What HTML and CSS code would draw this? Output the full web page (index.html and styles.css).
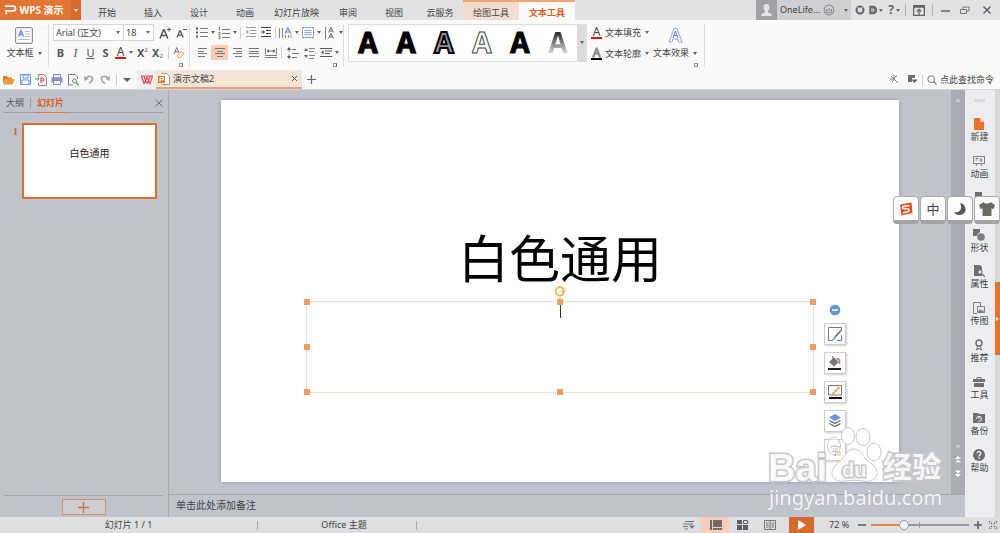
FILE: index.html
```html
<!DOCTYPE html>
<html lang="zh-CN">
<head>
<meta charset="utf-8">
<title>WPS 演示 - 演示文稿2</title>
<link rel="stylesheet" href="styles.css">
</head>
<body>
<div class="app">
  <header class="titlebar">
    <button class="brand" type="button">
      <svg width="13" height="12" viewBox="0 0 13 12"><path d="M1 2.2h8.2a2.3 2.3 0 0 1 0 4.6H2.2v3.4" fill="none" stroke="#fff" stroke-width="1.8"/></svg>
      <span>WPS 演示</span>
    </button>
    <button class="brand-menu" type="button" aria-label="菜单"><i class="caret"></i></button>
    <nav class="tabs">
      <button type="button">开始</button>
      <button type="button">插入</button>
      <button type="button">设计</button>
      <button type="button">动画</button>
      <button type="button">幻灯片放映</button>
      <button type="button">审阅</button>
      <button type="button">视图</button>
      <button type="button">云服务</button>
      <button type="button" class="context">绘图工具</button>
      <button type="button" class="context current">文本工具</button>
    </nav>
    <div class="account">
      <span class="avatar"><svg width="13" height="14" viewBox="0 0 13 14"><path d="M6.500 1a3 3.200 0 0 1 3 3.300c0 1.600-.8 2.800-1.500 3.600v1.300c1 .8 4 1 4.200 3.800H.8C1 10.200 4 10 5 9.200V7.900c-.7-.8-1.500-2-1.500-3.600A3 3.200 0 0 1 6.500 1z" fill="#e4e4e6"/></svg></span>
      <span>OneLife...</span>
      <svg width="12" height="12" viewBox="0 0 12 12"><circle cx="6" cy="6" r="4.800" fill="none" stroke="#909094" stroke-width="1.200"/><path d="M3.500 8.500v-3l1.400 1L6 4.500l1.100 2 1.400-1v3z" fill="none" stroke="#909094"/></svg>
      <i class="caret end"></i>
    </div>
    <div class="window-tools">
      <button type="button" class="w15" aria-label="皮肤"><svg width="10" height="10" viewBox="0 0 10 10"><circle cx="5" cy="5" r="3.500" fill="none" stroke="#626266" stroke-width="2"/><path d="M2 2.500l3 1.800 3-2M5 4.300V7" stroke="#e2e2e4" fill="none"/></svg></button>
      <button type="button" class="w18" aria-label="文档"><svg width="8" height="10" viewBox="0 0 8 10"><path d="M1 1.500h3a3.500 3.500 0 0 1 0 7H1z" fill="#777" stroke="#626266" stroke-width="1.300"/><path d="M3 3v4M4.700 4v2" stroke="#ddd"/></svg><i class="caret"></i></button>
      <button type="button" class="w18" aria-label="帮助"><b class="question">?</b><i class="caret"></i></button>
      <i class="sep"></i>
      <button type="button" class="w23" aria-label="功能区"><svg width="12" height="11" viewBox="0 0 12 11"><path d="M.6.600h10.800v9.800H.600zM0 2h12" fill="none" stroke="#666" stroke-width="1.400"/><path d="M6 10V5M3.800 6.500L6 4.300l2.200 2.200" fill="none" stroke="#666" stroke-width="1.300"/></svg></button>
      <i class="sep"></i>
      <button type="button" class="w22" aria-label="最小化"><svg width="10" height="10" viewBox="0 0 10 10"><path d="M1 6h9" stroke="#666" stroke-width="1.500"/></svg></button>
      <button type="button" class="w17" aria-label="还原"><svg width="10" height="10" viewBox="0 0 10 10"><path d="M.500 4.500h6v4h-6zM3 4V2h6v4H7" fill="none" stroke="#777"/></svg></button>
      <button type="button" class="w27" aria-label="关闭"><svg width="10" height="10" viewBox="0 0 10 10"><path d="M1.500 1.500l7 7M8.500 1.500l-7 7" stroke="#606064" stroke-width="1.500"/></svg></button>
    </div>
  </header>

  <section class="ribbon">
    <div class="group textbox-group">
      <button type="button" class="tall">
        <svg width="18" height="17" viewBox="0 0 18 17"><rect x=".700" y=".700" width="16.600" height="15.600" rx="1" fill="#fff" stroke="#777"/><path d="M3.500 9.500L6 3.500l2.500 6M4.300 7.500h3.400" fill="none" stroke="#5b8def" stroke-width="1.300"/><path d="M10 4.500h5M10 7h5M10 9.500h5M3.500 12.500H15" stroke="#bbb"/></svg>
        <span>文本框<i class="caret"></i></span>
      </button>
    </div>
    <div class="group font-group">
      <div class="row">
        <span class="combo font"><select aria-label="字体"><option>Arial (正文)</option></select><i class="caret"></i></span>
        <span class="combo size"><select aria-label="字号"><option>18</option></select><i class="caret"></i></span>
        <button type="button" class="w18 grow" aria-label="增大字号"><svg width="12" height="12" viewBox="0 0 12 12"><path d="M1 11.500L4.500 3h.8L8.800 11.500M2.500 8.500h5" fill="none" stroke="#555" stroke-width="1.500"/><path d="M8 2.500h4M10 .500v4" stroke="#555"/></svg></button>
        <button type="button" class="w15" aria-label="减小字号"><svg width="11" height="12" viewBox="0 0 11 12"><path d="M1 10.500L3.800 4h.6L7.200 10.500M2.200 8.200h4" fill="none" stroke="#555" stroke-width="1.300"/><path d="M7 2.500h4" stroke="#555"/></svg></button>
      </div>
      <div class="row letters">
        <button type="button" class="w15"><b>B</b></button>
        <button type="button" class="w15 italic">I</button>
        <button type="button" class="w15 underline">U</button>
        <button type="button" class="w15"><b>S</b></button>
        <button type="button" class="w22"><span class="fill-a">A</span><i class="caret"></i></button>
        <button type="button" class="w15" aria-label="上标"><b>X</b><sup>2</sup></button>
        <button type="button" class="w15" aria-label="下标"><b>X</b><sub>2</sub></button>
        <i class="sep"></i>
        <button type="button" class="w15" aria-label="清除格式"><svg width="12" height="13" viewBox="0 0 12 13"><path d="M1 8L3.700 1.500 6 7M2 5.800h3" fill="none" stroke="#777"/><path d="M4.500 9.500l3.800-4 2.700 2.300-3.800 4H5.500z" fill="#fff0dd" stroke="#eca35a"/></svg></button>
      </div>
      <button type="button" class="launcher" aria-label="字体设置"></button>
    </div>
    <div class="group para-group">
      <div class="row">
        <button type="button" class="w22" aria-label="项目符号"><svg width="12" height="11" viewBox="0 0 12 11"><path d="M4 1.500h8M4 5.500h8M4 9.500h8" stroke="#777"/><path d="M0 1.500h2M0 5.500h2M0 9.500h2" stroke="#555" stroke-width="2"/></svg><i class="caret"></i></button>
        <button type="button" class="w22" aria-label="编号"><svg width="12" height="12" viewBox="0 0 12 12"><path d="M4 2.500h8M4 6.500h8M4 10.500h8" stroke="#777"/><path d="M1.500 0v3.500M.500 5.500h1.500v1L.500 7.800H2.500M.500 9.500h1.500v2H.500" fill="none" stroke="#777"/></svg><i class="caret"></i></button>
        <i class="sep"></i>
        <button type="button" class="w15" aria-label="减少缩进"><svg width="10" height="11" viewBox="0 0 10 11"><path d="M0 .500h10M4 3.500h6M4 6.500h6M0 9.500h10M0 5h3" stroke="#999"/><path d="M2 3L0 5l2 2z" fill="#999"/></svg></button>
        <button type="button" class="w15" aria-label="增加缩进"><svg width="10" height="11" viewBox="0 0 10 11"><path d="M0 .500h10M5 3.500h5M5 6.500h5M0 9.500h10M0 5h3" stroke="#444"/><path d="M2 3l2 2-2 2z" fill="#444"/></svg></button>
        <i class="sep"></i>
        <button type="button" class="w22" aria-label="文字方向"><svg width="13" height="12" viewBox="0 0 13 12"><path d="M.500 1v10M3.500 1v10" stroke="#888"/><path d="M6.500 8v3M9.500 8v3M12 8v3" stroke="#888"/><path d="M6 7l2.800-6L12 7M7 5h4" fill="none" stroke="#6b8fe6" stroke-width="1.200"/></svg><i class="caret"></i></button>
        <button type="button" class="w22" aria-label="对齐文本"><svg width="12" height="11" viewBox="0 0 12 11"><rect x=".500" y=".500" width="11" height="10" fill="none" stroke="#777" stroke-dasharray="2 1"/><path d="M2.500 3.500h7M2.500 5.500h7M2.500 7.500h7" stroke="#8fa9ea"/></svg><i class="caret"></i></button>
        <button type="button" class="w22" aria-label="字符间距"><svg width="12" height="12" viewBox="0 0 12 12"><path d="M1.500 0v12" stroke="#777"/><path d="M4.500 5.500L7 .500l2.500 5M5.500 4h3M4.500 11.500L7 6.500l2.500 5M5.500 10h3" fill="none" stroke="#666"/></svg><i class="caret"></i></button>
      </div>
      <div class="row">
        <button type="button" class="w17" aria-label="左对齐"><svg width="10" height="9" viewBox="0 0 10 9"><path d="M0 .500h9M0 3.500h6M0 5.500h9M0 8.500h7" stroke="#777"/></svg></button>
        <button type="button" class="w17 active" aria-label="居中"><svg width="10" height="9" viewBox="0 0 10 9"><path d="M0 .500h10M2 3.500h6M0 5.500h10M2 8.500h6" stroke="#777"/></svg></button>
        <button type="button" class="w17" aria-label="右对齐"><svg width="10" height="9" viewBox="0 0 10 9"><path d="M1 .500h9M4 3.500h6M1 5.500h9M3 8.500h7" stroke="#777"/></svg></button>
        <button type="button" class="w17" aria-label="两端对齐"><svg width="10" height="9" viewBox="0 0 10 9"><path d="M0 .500h10M0 3.500h10M0 5.500h10M0 8.500h10" stroke="#777"/></svg></button>
        <button type="button" class="w17" aria-label="分散对齐"><svg width="12" height="10" viewBox="0 0 12 10"><path d="M.500 0v6M11.500 0v6M2 3h8M0 7.500h12M0 9.500h12" stroke="#777"/><path d="M4 1L2 3l2 2zM8 1l2 2-2 2z" fill="#555"/></svg></button>
        <i class="sep"></i>
        <button type="button" class="w17" aria-label="行距"><svg width="12" height="12" viewBox="0 0 12 12"><path d="M5 2.500h4M5 6.500h7M5 10.500h5M2 1v3.500M2 7.500V11" stroke="#777"/><path d="M0 3l2-3 2 3zM0 9l2 3 2-3z" fill="#555"/></svg></button>
        <button type="button" class="w17" aria-label="段间距"><svg width="12" height="12" viewBox="0 0 12 12"><path d="M5 1.500h6M5 4.500h5M5 8.500h6M5 11.500h5" stroke="#888"/><path d="M0 4l2-3 2 3zM0 8l2 3 2-3z" fill="#666"/></svg></button>
        <button type="button" class="w22" aria-label="缩进"><svg width="12" height="10" viewBox="0 0 12 10"><path d="M0 .500h12M5 3h7M5 5.500h5M0 8.500h12" stroke="#555"/><path d="M3.500 2L1 4.200l2.500 2.300z" fill="#555"/></svg><i class="caret"></i></button>
      </div>
      <button type="button" class="launcher" aria-label="段落设置"></button>
    </div>
    <div class="group gallery-group">
      <div class="gallery">
        <button type="button" class="shadow">A</button>
        <button type="button" class="shadow">A</button>
        <button type="button" class="gray-fill">A</button>
        <button type="button" class="hollow">A</button>
        <button type="button" class="solid">A</button>
        <button type="button" class="fade"><span>A</span></button>
        <button type="button" class="more" aria-label="更多样式"><i class="caret"></i></button>
      </div>
    </div>
    <div class="group effect-group">
      <div class="stack">
        <button type="button" class="labelled"><span class="fill-a">A</span>文本填充<i class="caret"></i></button>
        <button type="button" class="labelled"><span class="fill-a line-a">A</span>文本轮廓<i class="caret"></i></button>
      </div>
      <button type="button" class="tall">
        <svg width="15" height="17" viewBox="0 0 15 17"><path d="M1 15L6 1.500h3L14 15h-3l-1-3H5l-1 3z" fill="#fff" stroke="#8ea6e4"/><path d="M5 11l2.500-7L10 11M6 8.500h3" fill="none" stroke="#5f80d8"/></svg>
        <span>文本效果<i class="caret"></i></span>
      </button>
      <button type="button" class="launcher" aria-label="文本效果设置"></button>
    </div>
  </section>

  <section class="docbar">
    <div class="quick">
      <button type="button" aria-label="打开"><svg width="12" height="10" viewBox="0 0 12 10"><path d="M0 9V1h4l1 1.500h4V4H3z" fill="#e07f28"/><path d="M3 4h9L9.500 9.500H.500z" fill="#f39b3b"/></svg></button>
      <button type="button" aria-label="保存"><svg width="11" height="11" viewBox="0 0 11 11"><path d="M.500.500h10v10H.500z" fill="#e7effd" stroke="#6e9bea"/><path d="M3 1h5v3H3zM2 6h7v4.500H2z" fill="#fff" stroke="#6e9bea"/></svg></button>
      <button type="button" aria-label="输出PDF"><svg width="12" height="12" viewBox="0 0 12 12"><path d="M3.500 3V.500h5l3 3v8h-8V9" fill="none" stroke="#888"/><path d="M6 9V4h1.500a1.500 1.500 0 0 1 0 3H6" fill="none" stroke="#d84b50" stroke-width="1.200"/><path d="M0 5h4M2.500 3.500L4 5 2.500 6.500" fill="none" stroke="#4e9a58"/></svg></button>
      <button type="button" aria-label="打印"><svg width="12" height="11" viewBox="0 0 12 11"><path d="M2.500.500h7V4h-7z" fill="#eee" stroke="#8186bd"/><path d="M.500 3.500h11v5H.500z" fill="#8c8fc8"/><path d="M2.500 6.500h7v4h-7z" fill="#fff" stroke="#8186bd"/></svg></button>
      <button type="button" aria-label="打印预览"><svg width="11" height="12" viewBox="0 0 11 12"><path d="M9.500 5V3L7 .500H.500v10.500H5" fill="#fff" stroke="#777"/><circle cx="6.500" cy="7" r="2" fill="#dff1de" stroke="#57a056"/><path d="M8 8.500l2.500 2.500" stroke="#57a056" stroke-width="1.500"/></svg></button>
      <button type="button" aria-label="撤销"><svg width="10" height="9" viewBox="0 0 10 9"><path d="M2 4C4-.500 9 1 8.500 4.500 8.200 6.500 6.500 7.500 5 8.500" fill="none" stroke="#a3a3a6" stroke-width="1.600"/><path d="M0 1l.500 5 4-2z" fill="#a3a3a6"/></svg></button>
      <button type="button" aria-label="恢复"><svg width="10" height="9" viewBox="0 0 10 9"><path d="M8 4C6-.500 1 1 1.500 4.500 1.800 6.500 3.500 7.500 5 8.500" fill="none" stroke="#a3a3a6" stroke-width="1.600"/><path d="M10 1l-.500 5-4-2z" fill="#a3a3a6"/></svg></button>
      <i class="sep"></i>
      <button type="button" class="quick-more" aria-label="自定义"><i class="caret big"></i></button>
    </div>
    <button type="button" class="home" aria-label="首页"><svg width="12" height="10" viewBox="0 0 12 10"><path d="M.500 1L3 8.500 6 2.500 9 8.500 11.500 1M3 1l2.500 7.500M9 1L6.500 8.500M0 1h12" fill="none" stroke="#e14853" stroke-width="1.200"/></svg></button>
    <div class="doc">
      <svg width="12" height="12" viewBox="0 0 12 12"><path d="M3.500 1V.500h5l3 3v8h-8" fill="#fff" stroke="#999"/><path d="M0 3h7v7H0z" fill="#e77433"/><path d="M2 9V4.500h3.300v2.300H2" fill="none" stroke="#fff"/></svg>
      <span>演示文稿2</span>
      <button type="button" aria-label="关闭文档"><svg width="7" height="7" viewBox="0 0 7 7"><path d="M1 1l5 5M6 1L1 6" stroke="#555"/></svg></button>
    </div>
    <button type="button" class="new-doc" aria-label="新建文档"><svg width="9" height="9" viewBox="0 0 9 9"><path d="M0 4.500h9M4.500 0v9" stroke="#666" stroke-width="1.200"/></svg></button>
    <div class="find">
      <button type="button" class="w18" aria-label="工具"><svg width="9" height="9" viewBox="0 0 9 9"><path d="M1 1l7 7M4 0v4M0 4h5M2 7l3-3M5 2l2-1" stroke="#777"/></svg></button>
      <button type="button" class="w18" aria-label="布局"><svg width="10" height="9" viewBox="0 0 10 9"><path d="M0 0h7v3H4v4H0z" fill="#707074"/><path d="M3.500 4.500h6L6.500 8z" fill="#606064"/></svg></button>
      <i class="sep"></i>
      <button type="button" class="labelled"><svg width="10" height="10" viewBox="0 0 10 10"><circle cx="4.200" cy="4.200" r="3.400" fill="none" stroke="#777"/><path d="M6.500 6.500l3 3" stroke="#777" stroke-width="1.300"/></svg>点此查找命令</button>
    </div>
  </section>

  <main class="work">
    <aside class="slides">
      <div class="slides-head">
        <button type="button">大纲</button><i class="sep"></i><button type="button" class="current">幻灯片</button>
        <button type="button" class="close" aria-label="关闭窗格"><svg width="8" height="8" viewBox="0 0 8 8"><path d="M.500.500l7 7M7.500.500l-7 7" stroke="#6c6c74"/></svg></button>
      </div>
      <div class="thumb-row">
        <span class="num">1</span>
        <button type="button" class="thumb">白色通用</button>
      </div>
      <div class="slides-foot"><button type="button" aria-label="新建幻灯片"><svg width="11" height="11" viewBox="0 0 11 11"><path d="M0 5.500h11M5.500 0v11" stroke="#d0713d" stroke-width="1.300"/></svg></button></div>
    </aside>

    <section class="editor">
      <div class="stage">
        <div class="canvas">
          <div class="slide">
            <h1>白色通用</h1>
            <div class="frame">
              <i class="h tl"></i><i class="h tc"></i><i class="h tr"></i><i class="h ml"></i><i class="h mr"></i><i class="h bl"></i><i class="h bc"></i><i class="h br"></i>
              <svg class="rotate" width="12" height="16" viewBox="0 0 12 16"><path d="M9.500 7.500A4.200 4.200 0 1 1 10 4.500" fill="none" stroke="#f3ad3f" stroke-width="1.600"/><path d="M7 4.500h5L9.500 8z" fill="#f3ad3f"/><path d="M6 10v6" stroke="#f3ad3f"/></svg>
              <i class="cursor"></i>
            </div>
            <div class="float-tools">
              <button type="button" class="fold" aria-label="收起"><svg width="12" height="12" viewBox="0 0 12 12"><circle cx="6" cy="6" r="5.300" fill="#5f97dc"/><path d="M3 6h6" stroke="#fff" stroke-width="1.600"/></svg></button>
              <button type="button" aria-label="样式"><svg width="14" height="14" viewBox="0 0 14 14"><path d="M5 13.500H.500V.500h13V4M13.500 8v5.500H9" fill="none" stroke="#777"/><path d="M13 3.500L7 10" stroke="#666" stroke-width="1.500"/><path d="M7.500 9.500c-2-.500-2 2-3.500 3.500 2 .300 4-.500 3.500-3.500z" fill="#6f95e8"/></svg></button>
              <button type="button" aria-label="填充"><svg width="14" height="14" viewBox="0 0 14 14"><path d="M1 6l5-4.500 5 4.500-5 4.500z" fill="#777"/><path d="M5 0v5" stroke="#666"/><path d="M8.500 2.500c3 0 3.500 2 3 5.500" fill="none" stroke="#d96a6a" stroke-width="1.500"/><path d="M0 13h13" stroke="#222" stroke-width="2"/></svg></button>
              <button type="button" aria-label="轮廓"><svg width="14" height="14" viewBox="0 0 14 14"><path d="M.500.500h13v9.500H.500z" fill="none" stroke="#777"/><path d="M4 9.500L11.500 2" stroke="#f09a43" stroke-width="1.600"/><path d="M1 13h13" stroke="#111" stroke-width="2"/></svg></button>
              <button type="button" aria-label="层次"><svg width="14" height="14" viewBox="0 0 14 14"><path d="M7 0l6 3.500L7 7 1 3.500z" fill="#6a94e4"/><path d="M1.500 6.500L7 9.500l5.500-3M1.500 9.500L7 12.500l5.500-3" fill="none" stroke="#666" stroke-width="1.200"/></svg></button>
              <button type="button" aria-label="替换"><svg width="14" height="14" viewBox="0 0 14 14"><path d="M3 3.500h8M3 3v2.500M11 3v2.500M7 1.500v2M5 6h4.500L7.500 8v4.500H6M3.500 8.500h7" fill="none" stroke="#999"/><path d="M9 9.500h4M9 12h4" stroke="#efb58b"/></svg></button>
            </div>
          </div>
        </div>
        <div class="scroll">
          <i class="arrow up"></i>
          <i class="arrow down"></i>
          <svg width="6" height="7" viewBox="0 0 6 7"><path d="M0 3l3-3 3 3zM0 6.500l3-3 3 3z" fill="#fff"/></svg>
          <svg width="6" height="7" viewBox="0 0 6 7"><path d="M0 .500l3 3 3-3zM0 4l3 3 3-3z" fill="#fff"/></svg>
        </div>
      </div>
      <div class="notes">单击此处添加备注</div>
    </section>

    <aside class="tools">
      <i class="grip"></i>
      <button type="button"><svg viewBox="0 0 12 12"><path d="M1 0h6l4 4v8H1z" fill="#ee7026"/><path d="M7 0v4h4" fill="#fbc9a6"/></svg>新建</button>
      <button type="button"><svg viewBox="0 0 12 12"><path d="M.500 1.500h11v7H.500zM2.500 3.500h3M2.500 5h2M8 3v4M6.500 5h3M4 9l-1 2M8 9l1 2" fill="none" stroke="#808084"/></svg>动画</button>
      <button type="button" aria-label="切换"><svg viewBox="0 0 12 12"><path d="M1 0h7v5H1z" fill="#707074"/><path d="M4 6h7v5H4z" fill="#909094"/></svg></button>
      <button type="button"><svg viewBox="0 0 12 12"><path d="M0 0h7v3a5 5 0 0 0-3 4H0z" fill="#707074"/><circle cx="8" cy="8" r="3.800" fill="#808084"/></svg>形状</button>
      <button type="button"><svg viewBox="0 0 12 12"><path d="M1 0h6l2 2v9H1z" fill="#707074"/><circle cx="7" cy="7" r="2.200" fill="#ddd" stroke="#707074"/><path d="M8.500 8.500L12 12" stroke="#707074" stroke-width="1.300"/></svg>属性</button>
      <button type="button"><svg viewBox="0 0 12 12"><path d="M4 11.500H.500V.500h7V4M4.500 4.500h7v6h-7z" fill="none" stroke="#808084"/><path d="M5 10l2-3 2 2 1-1 1 2z" fill="#808084"/></svg>传图</button>
      <button type="button"><svg viewBox="0 0 12 12"><circle cx="6" cy="4" r="3" fill="none" stroke="#707074" stroke-width="1.500"/><path d="M4.500 7L3.500 11 6 9.500 8.500 11l-1-4" fill="none" stroke="#707074"/></svg>推荐</button>
      <button type="button"><svg viewBox="0 0 12 12"><path d="M4 3V1.500h4V3" fill="none" stroke="#707074"/><path d="M0 3h12v3H0zM1 7h10v4H1z" fill="#707074"/></svg>工具</button>
      <button type="button"><svg viewBox="0 0 12 12"><path d="M0 1h5l1 1h6v9H0z" fill="#707074"/><path d="M3.500 7a2.500 2.500 0 1 1 2 2.300M6 4v3" fill="none" stroke="#eee"/></svg>备份</button>
      <button type="button"><svg viewBox="0 0 12 12"><circle cx="6" cy="6" r="6" fill="#6c6c70"/><path d="M4.200 4.500a1.800 1.800 0 1 1 2.600 1.600c-.600.300-.800.600-.800 1.400M6 8.500V10" fill="none" stroke="#fff" stroke-width="1.300"/></svg>帮助</button>
    </aside>
    <div class="edge"><button type="button" aria-label="展开"></button></div>
  </main>

  <footer class="status">
    <span class="page-no">幻灯片 1 / 1</span>
    <i class="sep"></i>
    <span class="theme">Office 主题</span>
    <i class="sep"></i>
    <div class="views">
      <button type="button" class="w27" aria-label="备注"><svg width="12" height="9" viewBox="0 0 12 9"><path d="M2 .500h9M0 3h10M0 5.500h5M2 8h3" stroke="#777"/><path d="M6 4.500h6L9 8z" fill="#777"/></svg></button>
      <button type="button" class="w27 active" aria-label="普通视图"><svg width="12" height="10" viewBox="0 0 12 10"><path d="M0 0h2v10H0zM3 0h9v7H3zM3 8h9v2H3z" fill="#6d6a6a"/></svg></button>
      <button type="button" class="w27" aria-label="浏览视图"><svg width="11" height="10" viewBox="0 0 11 10"><path d="M0 0h5v4H0zM6 5h5v5H6zM0 5h5v5H0z" fill="#606064"/><path d="M6.500.500h4v3h-4z" fill="none" stroke="#606064"/></svg></button>
      <button type="button" class="w27" aria-label="阅读视图"><svg width="12" height="10" viewBox="0 0 12 10"><path d="M.500.500h11v9H.500zM6 0v10M2 3h2.500M2 5h2.500M2 7h2.500M7.500 3H10M7.500 5H10M7.500 7H10" fill="none" stroke="#777"/></svg></button>
    </div>
    <button type="button" class="play" aria-label="放映"><svg width="8" height="10" viewBox="0 0 8 10"><path d="M0 0l8 5-8 5z" fill="#fff"/></svg></button>
    <span class="zoom-value">72 %</span>
    <button type="button" class="w15" aria-label="缩小"><svg width="8" height="8" viewBox="0 0 8 8"><path d="M0 4h8" stroke="#606064" stroke-width="1.600"/></svg></button>
    <input type="range" min="0" max="100" value="32" aria-label="显示比例">
    <button type="button" class="w15" aria-label="放大"><svg width="8" height="8" viewBox="0 0 8 8"><path d="M0 4h8M4 0v8" stroke="#606064" stroke-width="1.600"/></svg></button>
    <button type="button" class="w15" aria-label="适应窗口"><svg width="8" height="8" viewBox="0 0 8 8"><path d="M0 2.500V0h2.500M5.500 0H8v2.500M8 5.500V8H5.500M2.500 8H0V5.500M2 2l1 1M6 2L5 3M2 6l1-1M6 6L5 5" fill="none" stroke="#666" stroke-width="1.200"/></svg></button>
  </footer>

  <div class="watermark">
    <svg width="190" height="84" viewBox="0 0 190 84" role="img" aria-label="Baidu 经验">
      <g fill="#fff" fill-opacity=".85" stroke="#c8c8cc">
        <ellipse cx="76" cy="19" rx="6.500" ry="9" fill-opacity=".4"/><ellipse cx="90" cy="9" rx="6.500" ry="8.500"/><ellipse cx="105" cy="10" rx="7" ry="8.500"/><ellipse cx="116" cy="25" rx="7" ry="9"/>
        <path d="M96 22c7 0 8 6 12 10s12 8 11 15-9 8-14 7-12-1-18 0-12-1-13-7 6-11 10-15 5-10 12-10z"/>
        <g stroke-width="3" paint-order="stroke">
          <text class="wm-logo" x="10" y="54">Bai</text>
          <text class="wm-du" x="84" y="50">du</text>
          <text class="wm-cjk" x="125" y="51">经验</text>
        </g>
      </g>
      <text class="wm-url" x="11" y="78">jingyan.baidu.com</text>
    </svg>
  </div>

  <div class="ime">
    <button type="button" aria-label="搜狗"><svg width="14" height="14" viewBox="0 0 14 14"><path d="M1 2.500L12.500.500 13.500 11 2.500 13.500z" fill="#ef4b23"/><path d="M10.500 3.500L4.500 4.200c-1.500.300-1.200 2.300.300 2.400l4 .200c1.800.200 1.800 2.700 0 3L4 10.800" fill="none" stroke="#fff" stroke-width="1.600"/></svg></button>
    <button type="button">中</button>
    <button type="button" aria-label="月亮"><svg width="12" height="12" viewBox="0 0 12 12"><path d="M6 0c7 1 8 11 0 12-2.500.300-5-1-6-3 6 1.500 9-4 6-9z" fill="#58585a"/></svg></button>
    <button type="button" aria-label="皮肤"><svg width="16" height="14" viewBox="0 0 16 14"><path d="M4.500 0C6 2 10 2 11.500 0L16 3l-1.500 4-2-.500V14h-9V6.500l-2 .500L0 3z" fill="#6b6a62"/></svg></button>
  </div>
</div>
</body>
</html>
```
FILE: styles.css
```css
* { box-sizing: border-box; }

body {
  margin: 0;
  font: 9px/12px "Noto Sans", "Noto Sans CJK SC", sans-serif;
  color: #444;
}

button, select {
  font: inherit;
  color: inherit;
  background: none;
  border: 0;
  padding: 0;
  margin: 0;
  white-space: nowrap;
}

button {
  display: inline-flex;
  align-items: center;
  justify-content: center;
  flex: none;
}

svg { display: block; flex: none; }

.app {
  position: relative;
  display: grid;
  grid-template-rows: auto auto auto 1fr auto;
  min-height: 100vh;
  overflow: hidden;
  background: #fafafa;
}

.caret {
  flex: none;
  border: 2px solid transparent;
  border-top: 3px solid #666;
  border-bottom: 0;
  margin-left: 4px;
}
.caret.big { border-width: 4px 4px 0; margin: 0; }

.sep { flex: none; width: 1px; height: 12px; background: #d0d0d2; }

.w15 { width: 15px; }
.w17 { width: 17px; }
.w18 { width: 18px; }
.w22 { width: 22px; }
.w23 { width: 23px; }
.w27 { width: 27px; }

/* title bar */
.titlebar { display: flex; height: 20px; background: #e2e2e4; }
.brand { width: 71px; gap: 3px; padding-right: 4px; background: #e37433; color: #fff; font-size: 10px; font-weight: 700; }
.brand-menu { width: 10px; background: #d86b2c; }
.brand-menu .caret { border-top-color: #fff; margin: 0; }
.tabs { display: flex; margin-left: 3px; }
.tabs button { min-width: 46px; padding: 4px 6px 0; border-top: 1px solid transparent; }
.tabs .context { width: 56px; background: #f3ddd0; border-top: 2px solid #f0a577; padding-top: 3px; }
.tabs .context.current { background: #fafafa; color: #d9601c; font-weight: 700; }
.account { display: flex; align-items: center; gap: 3px; width: 95px; margin-left: auto; padding-right: 3px; background: #cfcfd1; }
.account .end { margin-left: auto; }
.avatar { display: flex; align-items: center; justify-content: center; align-self: stretch; width: 21px; background: #a1a1a5; }
.window-tools { display: flex; align-items: center; padding-left: 1px; }
.window-tools .caret { margin-left: 2px; }
.window-tools .sep { background: #b4b4b6; margin: 0 1px 0 2px; }
.question { font-size: 12px; color: #666; }

/* ribbon */
.ribbon { display: flex; height: 50px; padding: 4px 0 3px; }
.group { position: relative; display: flex; flex-direction: column; border-right: 1px solid #dedee0; }
.row { display: flex; align-items: center; height: 17px; }
.row + .row { margin-top: 3px; }
.textbox-group { width: 49px; padding-top: 3px; }
.tall { flex-direction: column; gap: 3px; }
.tall span { display: flex; align-items: center; }
.launcher { position: absolute; right: 6px; bottom: 0; width: 4px; height: 4px; border: 1px solid #999; border-right-color: #666; }
.font-group { width: 141px; padding-left: 4px; }
.combo { position: relative; display: flex; align-items: center; height: 17px; border: 1px solid #d4d4d6; background: #fff; }
.combo + .combo { border-left: 0; }
.combo select { width: 100%; height: 15px; padding-left: 2px; appearance: none; }
.combo .caret { position: absolute; right: 3px; }
.font { width: 71px; }
.size { width: 30px; }
.grow { margin-left: 2px; }
.letters { font-size: 11px; color: #555; }
.letters sup, .letters sub { font-size: 6px; line-height: 6px; margin-bottom: 5px; }
.letters sub { margin: 6px 0 0; }
.letters .caret { margin-left: 3px; }
.letters .sep { margin: 0 2px 0 3px; }
.italic { font-style: italic; font-family: "Liberation Serif", serif; font-size: 12px; }
.underline { text-decoration: underline; }
.fill-a { width: 11px; height: 13px; border-bottom: 2px solid #e11; font-size: 12px; line-height: 11px; text-align: center; color: #444; }
.line-a { border-color: #000; color: #fff; -webkit-text-stroke: 1px #888; }
.para-group { width: 154px; padding-left: 4px; }
.para-group .caret { margin-left: 3px; }
.para-group .sep { margin: 0 2px; }
.para-group .w17 { height: 15px; }
.active { background: #fbcdb9; }
.gallery-group { border: 0; padding-left: 4px; }
.gallery { display: flex; height: 38px; border: 1px solid #dedee0; background: #fff; font: 700 28px/32px "Open Sans", sans-serif; color: #000; }
.gallery button { width: 38px; padding-bottom: 2px; }
.shadow { text-shadow: 1px 1px 1px #999; -webkit-text-stroke: 1px #000; }
.solid { -webkit-text-stroke: 1px #000; }
.gray-fill { color: #999; -webkit-text-stroke: 2px #000; }
.hollow { color: #fff; -webkit-text-stroke: 1px #444; }
.fade span { background: linear-gradient(#333 25%, #ccc 80%); background-clip: text; -webkit-background-clip: text; color: transparent; }
.gallery .more { width: 9px; background: #dcdcde; }
.gallery .more .caret { margin: 0; }
.effect-group { flex-direction: row; align-items: flex-start; gap: 4px; width: 118px; padding-left: 4px; }
.stack { display: flex; flex-direction: column; gap: 8px; padding-top: 2px; }
.labelled { gap: 3px; }
.labelled .caret { margin-left: 1px; }
.effect-group .tall { padding-top: 3px; }

/* quick access and document tabs */
.docbar { display: flex; align-items: stretch; height: 20px; border-bottom: 1px solid #d4d5da; }
.quick { display: flex; align-items: center; padding-left: 1px; }
.quick button { width: 16px; }
.quick .sep { margin-left: 3px; }
.quick .quick-more { width: 20px; }
.home { width: 19px; background: #eeeeef; }
.doc { display: flex; align-items: center; gap: 3px; width: 146px; padding: 0 4px 0 2px; background: #f3e4d5; border-bottom: 2px solid #eda077; }
.doc button { margin-left: auto; }
.new-doc { width: 19px; }
.find { display: flex; align-items: center; margin-left: auto; padding-right: 6px; }
.find .sep { margin-right: 4px; }

/* workspace */
.work { display: flex; background: #c0c3cc; }
.slides { display: flex; flex-direction: column; width: 169px; flex: none; padding: 6px 5px 2px 4px; border-right: 1px solid #a9abb5; }
.slides-head { display: flex; align-items: stretch; height: 17px; border-bottom: 1px solid #9c9ea9; padding-left: 2px; }
.slides-head .sep { margin: 2px 4px 0 6px; background: #9c9ea9; height: 10px; }
.slides-head button { height: 17px; color: #555; padding-bottom: 3px; }
.slides-head .current { padding: 0 2px 2px; color: #d9601c; font-weight: 700; border-bottom: 1px solid #e37433; }
.slides-head .close { margin-left: auto; }
.thumb-row { display: flex; gap: 4px; padding: 10px 6px 0 9px; }
.num { width: 5px; padding-top: 3px; font: 700 10px/12px "Liberation Serif", serif; color: #d9601c; }
.thumb { flex: 1; aspect-ratio: 135 / 76; border: 2px solid #dc6f31; background: #fff; color: #222; font-size: 10px; padding-bottom: 16px; }
.slides-foot { display: flex; justify-content: center; margin-top: auto; padding-top: 3px; border-top: 1px solid #a3a5b0; }
.slides-foot button { width: 44px; height: 16px; border: 1px solid #d68f6a; background: #cccdd0; }

.editor { flex: 1; display: flex; flex-direction: column; min-width: 0; }
.stage { flex: 1; display: flex; border-bottom: 1px solid #a3a5b0; }
.canvas { flex: 1; padding: 10px 52px; }
.slide { position: relative; aspect-ratio: 678 / 382; background: #fff; box-shadow: 0 0 4px #8f919c; }
.slide h1 { position: absolute; top: 33%; left: 0; right: 0; margin: 0; text-align: center; font: 400 51px/60px "Noto Sans CJK SC", sans-serif; color: #000; }
.frame { position: absolute; left: 12.500%; top: 52.600%; width: 75%; height: 24.200%; border: 1px dotted #f7c4a8; }
.h { position: absolute; width: 6px; height: 6px; margin: -3px; background: #f09a66; }
.tl, .tc, .tr { top: 0; }
.ml, .mr { top: 50%; }
.bl, .bc, .br { top: 100%; }
.tl, .ml, .bl { left: 0; }
.tc, .bc { left: 50%; }
.tr, .mr, .br { left: 100%; }
.rotate { position: absolute; left: 50%; bottom: 100%; margin-left: -6px; }
.cursor { position: absolute; left: 50%; top: 3px; width: 1px; height: 13px; background: #333; }
.float-tools { position: absolute; left: 89%; top: 53.300%; display: flex; flex-direction: column; align-items: center; gap: 7px; }
.float-tools button { width: 22px; height: 22px; background: #fff; border: 1px solid #ccc; box-shadow: 1px 1px 2px #ccc; }
.float-tools .fold { height: 12px; border: 0; box-shadow: none; }
.scroll { display: flex; flex-direction: column; align-items: center; gap: 7px; width: 14px; padding: 8px 0 17px; background: #a9aab4; }
.arrow { border: 3px solid transparent; }
.arrow.up { border-bottom: 4px solid #c9cad0; border-top: 0; }
.arrow.down { margin-top: auto; border-top: 4px solid #c9cad0; border-bottom: 0; }
.notes { height: 22px; padding: 4px 7px; font-size: 10px; }

.tools { display: flex; flex-direction: column; align-items: center; width: 30px; flex: none; background: #ebedf0; padding: 9px 1px 0 0; }
.grip { width: 11px; height: 3px; background: #dadbde; margin-bottom: 16px; }
.tools button { flex-direction: column; justify-content: flex-start; gap: 1px; height: 36px; margin-bottom: 1px; }
.tools button:nth-of-type(4n) { margin-bottom: 0; }
.tools svg { width: 12px; height: 12px; }
.edge { width: 5px; flex: none; padding-top: 192px; background: #d9d9da; }
.edge button { width: 5px; height: 73px; background: #ec7128; }
.edge button::after { content: ""; border: 2px solid transparent; border-left: 3px solid #fff; border-right: 0; }

/* status bar */
.status { display: flex; align-items: center; height: 16px; background: #dddee0; }
.status .sep { height: 9px; background: #aaaaae; }
.page-no { width: 257px; text-align: center; }
.theme { width: 158px; padding-left: 14px; text-align: center; }
.views { display: flex; align-self: stretch; margin-left: auto; }
.play { align-self: stretch; width: 25px; margin: 0 15px 0 6px; background: #d46b2c; }
.zoom-value { width: 25px; }
.status input {
  appearance: none;
  width: 98px;
  height: 12px;
  margin: 0 1px 0 2px;
  background: linear-gradient(90deg, #ec8144 32px, #9a9a9e 32px) center / 100% 2px no-repeat, linear-gradient(#9a9a9e, #9a9a9e) 48px center / 1px 6px no-repeat;
}
.status input::-webkit-slider-thumb { appearance: none; width: 10px; height: 10px; border: 1px solid #999; border-radius: 50%; background: #f6f6f6; }

/* overlays */
.watermark { position: absolute; right: 52px; bottom: 22px; pointer-events: none; }
.wm-logo { font: 700 38px "Liberation Sans", sans-serif; }
.wm-du { font: 700 20px "Liberation Sans", sans-serif; }
.wm-cjk { font: 700 29px "Noto Sans CJK SC", sans-serif; }
.wm-url { font: 400 20px "Noto Sans", sans-serif; fill: #f4f4f6; paint-order: stroke; stroke: #b4b5bc; stroke-width: 1px; }
.ime { position: absolute; right: 0; top: 196px; display: flex; gap: 1px; padding-left: 1px; }
.ime button { width: 26px; height: 28px; border: 1px solid #aaa; border-bottom: 4px solid #a4a4a6; border-radius: 4px; background: #fcfcfc; font-size: 13px; }
```
